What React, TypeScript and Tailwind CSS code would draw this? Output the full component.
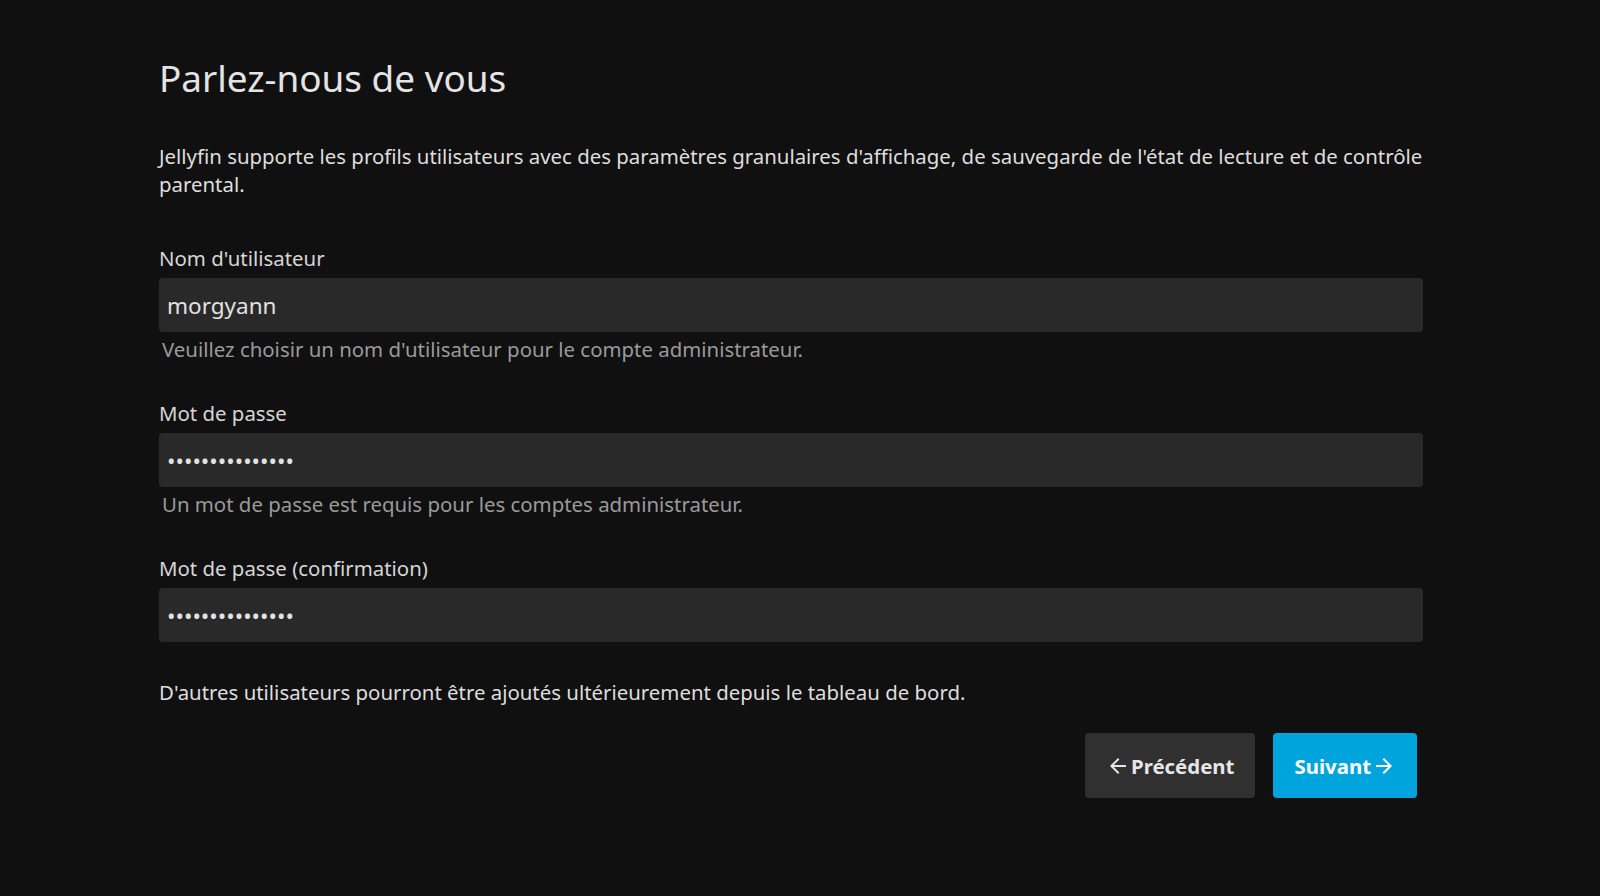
import React from "react";

/* Material-style arrows used in the wizard buttons */
function ArrowBack() {
  return (
    <svg viewBox="0 0 24 24" className="h-[24px] w-[24px] shrink-0" fill="currentColor">
      <path d="M20 11H7.83l5.59-5.59L12 4l-8 8 8 8 1.41-1.41L7.83 13H20v-2z" />
    </svg>
  );
}

function ArrowForward() {
  return (
    <svg viewBox="0 0 24 24" className="h-[24px] w-[24px] shrink-0" fill="currentColor">
      <path d="M12 4l-1.41 1.41L16.17 11H4v2h12.17l-5.58 5.59L12 20l8-8z" />
    </svg>
  );
}

function Field({
  label,
  type,
  value,
  help,
}: {
  label: string;
  type: string;
  value: string;
  help?: string;
}) {
  return (
    <div className="mb-[36px]">
      <label className="block text-[#d6d6d6]">{label}</label>
      <input
        type={type}
        defaultValue={value}
        readOnly
        className="mt-[6px] block h-[54px] w-full rounded-[4px] bg-[#292929] px-[8px] text-[22.5px] text-[#e2e2e2] outline-none"
      />
      {help && <div className="mt-[3px] pl-[3px] text-[#9a9a9a]">{help}</div>}
    </div>
  );
}

export default function App() {
  return (
    <div className="min-h-screen w-full bg-[#101010] font-['Noto_Sans',sans-serif] text-[20.4px] leading-[28px] text-[#dedede]">
      <div className="ml-[159px] w-[1264px] pt-[53px]">
        <h1 className="text-[36.9px] font-normal leading-[50px] text-[#e4e4e4]">
          Parlez-nous de vous
        </h1>
        <p className="mr-[-24px] mt-[39px]">
          Jellyfin supporte les profils utilisateurs avec des paramètres granulaires d'affichage, de
          sauvegarde de l'état de lecture et de contrôle parental.
        </p>

        <div className="mt-[46px]">
          <Field
            label="Nom d'utilisateur"
            type="text"
            value="morgyann"
            help="Veuillez choisir un nom d'utilisateur pour le compte administrateur."
          />
          <Field
            label="Mot de passe"
            type="password"
            value="morgyannpasswd1"
            help="Un mot de passe est requis pour les comptes administrateur."
          />
          <Field label="Mot de passe (confirmation)" type="password" value="morgyannpasswd1" />
        </div>

        <p>D'autres utilisateurs pourront être ajoutés ultérieurement depuis le tableau de bord.</p>

        <div className="mt-[27px] flex justify-end gap-[18px] pr-[6px]">
          <button className="flex h-[65px] items-center rounded-[4px] bg-[#303030] px-[21px] font-bold text-[#e6e6e6]">
            <ArrowBack />
            <span className="ml-[1px]">Précédent</span>
          </button>
          <button className="flex h-[65px] items-center rounded-[4px] bg-[#00a4dc] px-[21px] font-bold text-white">
            <span className="mr-[1px]">Suivant</span>
            <ArrowForward />
          </button>
        </div>
      </div>
    </div>
  );
}
